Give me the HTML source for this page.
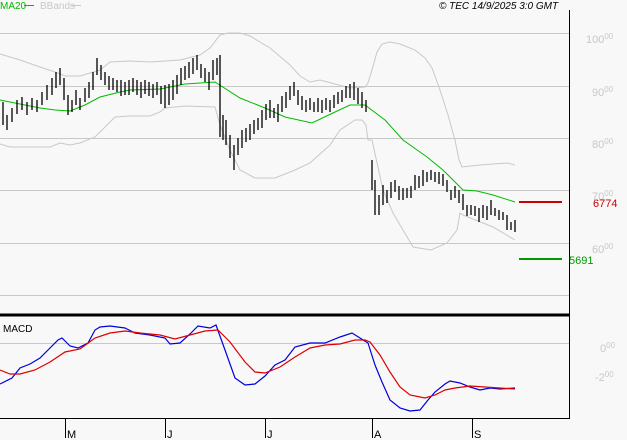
<!DOCTYPE html>
<html><head><style>
body{margin:0;background:#f8f8f8;}
svg{display:block;font-family:"Liberation Sans",sans-serif;}
</style></head><body>
<svg width="627" height="440" viewBox="0 0 627 440" xmlns="http://www.w3.org/2000/svg">
<rect width="627" height="440" fill="#f8f8f8"/>
<g stroke="#c8c8c8" stroke-width="1">
<line x1="0" y1="33.5" x2="569" y2="33.5"/>
<line x1="0" y1="86.5" x2="569" y2="86.5"/>
<line x1="0" y1="138.5" x2="569" y2="138.5"/>
<line x1="0" y1="190.5" x2="569" y2="190.5"/>
<line x1="0" y1="243.5" x2="569" y2="243.5"/>
<line x1="0" y1="295.5" x2="569" y2="295.5"/>
<line x1="0" y1="343.5" x2="569" y2="343.5"/>
</g>
<g fill="none" stroke="#c8c8c8" stroke-width="1">
<polyline points="0,54 20,60 40,67 55,72 65,76 80,76 100,70 110,62 130,61 150,62 180,60 200,55 210,48 220,35 228,33 240,33 250,36 270,48 290,65 300,76 310,82 320,80 335,84 350,88 365,87 368,83 372,70 377,52 382,44 390,42 400,44 415,50 425,58 432,68 440,90 448,115 455,140 459,160 462,167 480,165 507,163 515,165"/>
<polyline points="0,144 10,147 50,147 60,143 70,145 80,143 95,137 105,127 115,117 130,116 150,116 160,112 165,108 185,106 215,107 220,125 230,150 240,170 255,178 275,178 295,170 310,163 330,145 340,130 355,120 362,120 366,125 368,140 372,140 383,190 393,213 403,230 413,247 431,250 447,243 457,230 460,213 463,215 493,227 515,240"/>
</g>
<polyline fill="none" stroke="#00bb00" stroke-width="1" points="0,100 20,104 40,108 55,110 70,111 85,105 100,97 120,92 130,90 160,89 185,84 215,82 240,98 265,108 285,117 312,123 335,112 350,105 365,105 385,120 403,140 427,157 443,170 463,190 477,191 493,195 515,202"/>
<path fill="none" stroke="#000" stroke-width="1.3" d="M3,102V125M7,115V130M12,108V122M17,100V114M22,97V110M27,102V115M32,98V110M37,100V112M42,92V105M47,85V100M52,78V95M56,72V88M60,68V85M64,78V100M68,95V115M72,100V112M76,90V105M80,98V110M85,88V102M89,82V98M93,72V90M97,58V75M101,65V80M105,72V85M109,76V90M113,78V90M117,80V92M121,80V96M125,82V95M129,80V95M133,78V92M137,80V95M141,82V98M145,80V94M149,82V96M153,84V98M157,82V95M161,86V104M165,85V108M169,84V105M173,80V100M177,75V94M181,68V85M185,66V80M189,62V78M193,58V74M197,55V70M201,64V78M205,68V82M209,72V90M213,60V80M217,58V75M220,55V137M223,115V140M226,120V145M230,135V158M234,145V170M238,138V155M242,130V148M246,128V142M250,124V140M254,120V134M258,118V130M262,110V128M266,104V120M270,100V118M274,108V118M278,104V122M282,96V112M286,92V108M290,86V100M294,82V96M298,90V105M302,96V110M306,100V112M310,98V110M314,102V112M318,98V112M322,100V113M326,98V110M330,100V112M334,95V108M338,92V104M342,90V102M346,86V98M350,84V98M354,82V100M358,88V104M362,92V108M366,100V112M372,160V190M375,180V215M379,195V215M383,185V205M387,190V203M391,182V198M395,180V192M399,186V200M403,188V200M407,188V198M411,186V198M415,175V190M419,176V188M423,170V186M427,172V182M431,170V180M435,172V182M439,172V184M443,174V186M447,180V192M451,190V200M455,186V198M459,190V203M463,194V210M467,205V216M471,205V215M475,206V216M479,208V222M483,205V218M487,206V220M491,200V215M495,208V216M499,210V220M503,212V220M507,215V230M511,222V230M515,220V232"/>
<line x1="519" y1="202" x2="562" y2="202" stroke="#cc0000" stroke-width="2"/>
<line x1="519" y1="259" x2="562" y2="259" stroke="#009900" stroke-width="2"/>
<polyline fill="none" stroke="#0000dd" stroke-width="1.2" points="0,384 12,378 20,368 30,364 40,358 50,348 58,340 62,338 70,346 78,348 88,343 95,330 100,327 110,326 125,328 135,333 150,335 165,338 170,344 180,343 190,334 198,326 210,328 216,325 225,350 235,378 245,385 255,384 265,376 275,365 285,360 295,347 310,343 325,343 340,337 352,333 360,338 368,343 375,365 382,382 390,400 400,408 410,411 420,410 428,400 435,392 445,384 450,381 460,383 470,387 480,390 490,388 500,389 515,388"/>
<polyline fill="none" stroke="#dd0000" stroke-width="1.2" points="0,370 10,374 20,374 35,370 50,362 65,352 80,349 95,338 110,333 125,331 140,333 160,335 175,339 190,335 205,331 218,330 230,342 245,362 255,372 265,373 280,367 295,357 310,348 325,345 340,344 355,340 365,340 370,342 380,355 390,372 400,387 410,395 425,398 435,395 445,390 455,388 470,386 515,389"/>
<line x1="0" y1="315" x2="569" y2="315" stroke="#000" stroke-width="3"/>
<line x1="569.5" y1="10" x2="569.5" y2="419" stroke="#000" stroke-width="1"/>
<line x1="0" y1="418.5" x2="570" y2="418.5" stroke="#000" stroke-width="1"/>
<g stroke="#000" stroke-width="1">
<line x1="65.5" y1="419" x2="65.5" y2="438"/><line x1="165.5" y1="419" x2="165.5" y2="438"/>
<line x1="265.5" y1="419" x2="265.5" y2="438"/><line x1="372.5" y1="419" x2="372.5" y2="438"/>
<line x1="472.5" y1="419" x2="472.5" y2="438"/>
</g>
<g font-size="11" fill="#000">
<text x="67" y="438">M</text><text x="167" y="438">J</text><text x="267" y="438">J</text>
<text x="374" y="438">A</text><text x="474" y="438">S</text>
<text x="3" y="332" font-size="10">MACD</text>
<text x="439" y="9" font-size="10" font-style="italic">© TEC 14/9/2025 3:0 GMT</text>
</g>
<text x="0" y="9" font-size="10" fill="#00bb00">MA20</text>
<line x1="24" y1="5.5" x2="34" y2="5.5" stroke="#00bb00"/>
<text x="40" y="9" font-size="10" fill="#c8c8c8">BBands</text>
<line x1="71" y1="5.5" x2="81" y2="5.5" stroke="#c8c8c8"/>
<g font-size="11" fill="#c8c8c8">
<text x="586" y="43">100<tspan font-size="8" dy="-4">00</tspan></text>
<text x="592" y="96">90<tspan font-size="8" dy="-4">00</tspan></text>
<text x="592" y="148">80<tspan font-size="8" dy="-4">00</tspan></text>
<text x="592" y="200">70<tspan font-size="8" dy="-4">00</tspan></text>
<text x="592" y="253">60<tspan font-size="8" dy="-4">00</tspan></text>
<text x="600" y="352">0<tspan font-size="8" dy="-4">00</tspan></text>
<text x="595" y="381">-2<tspan font-size="8" dy="-4">00</tspan></text>
</g>
<text x="593" y="207" font-size="11" fill="#cc0000">6774</text>
<text x="569" y="264" font-size="11" fill="#009900">5691</text>
</svg>
</body></html>
